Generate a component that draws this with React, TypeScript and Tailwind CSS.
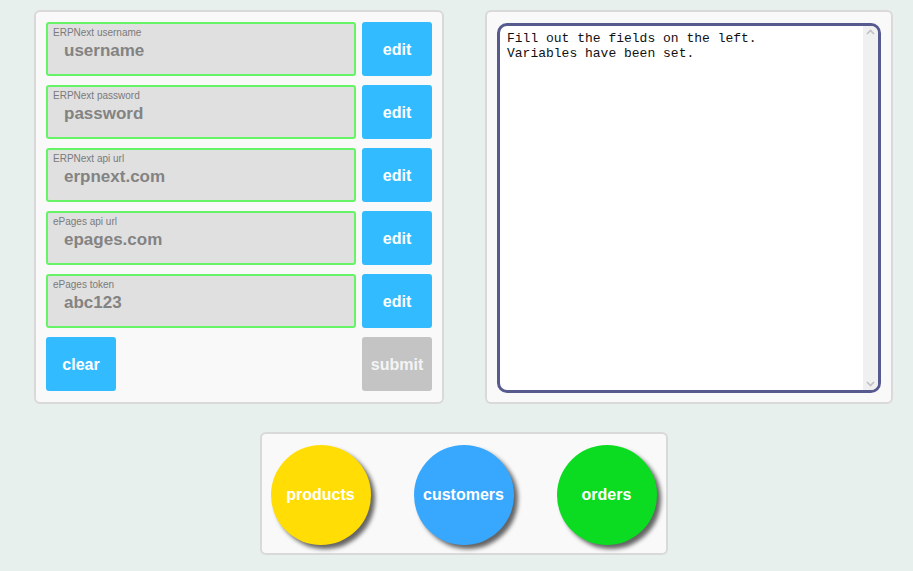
import React from "react";

const fields = [
  { label: "ERPNext username", value: "username" },
  { label: "ERPNext password", value: "password" },
  { label: "ERPNext api url", value: "erpnext.com" },
  { label: "ePages api url", value: "epages.com" },
  { label: "ePages token", value: "abc123" },
];

const circles = [
  { name: "products", color: "bg-[#ffdd05]" },
  { name: "customers", color: "bg-[#38a8fe]" },
  { name: "orders", color: "bg-[#0bdc22]" },
];

export default function App() {
  return (
    <div className="min-h-[571px] bg-[#e7f0ed] pl-[34px] pt-[10px] font-['Liberation_Sans',Arial,sans-serif]">
      <div className="w-[859px]">
        <div className="flex gap-[41px]">
          {/* settings panel */}
          <div className="w-[410px] h-[394px] rounded-[6px] border-2 border-[#d9d9d9] bg-[#f9f9f9] pt-[10px] pl-[10px] pr-[10px]">
            <div className="flex flex-col gap-[9px]">
              {fields.map((f) => (
                <div key={f.label} className="flex gap-[6px]">
                  <div className="w-[310px] h-[54px] rounded-[3px] border-2 border-[#66f466] bg-[#e0e0e0] pl-[5px] pt-[3px]">
                    <div className="text-[10px] leading-[12px] text-[#7a7a7a]">{f.label}</div>
                    <div className="pl-[11px] pt-[1px] text-[17px] leading-[21px] font-bold text-[#838383]">
                      {f.value}
                    </div>
                  </div>
                  <button className="w-[70px] h-[54px] pt-[1px] rounded-[3px] bg-[#33bbff] text-white font-bold text-[16px]">
                    edit
                  </button>
                </div>
              ))}
              <div className="flex justify-between">
                <button className="w-[70px] h-[54px] pt-[1px] rounded-[3px] bg-[#33bbff] text-white font-bold text-[16px]">
                  clear
                </button>
                <button className="w-[70px] h-[54px] pt-[1px] rounded-[3px] bg-[#c4c4c4] text-[#f4f4f4] font-bold text-[16px]">
                  submit
                </button>
              </div>
            </div>
          </div>

          {/* output panel */}
          <div className="w-[408px] h-[394px] rounded-[6px] border-2 border-[#d9d9d9] bg-[#f9f9f9] pt-[11px] pl-[10px] pr-[10px]">
            <div className="flex h-[370px] rounded-[10px] border-[3px] border-[#565a8f] bg-white overflow-hidden">
              <div className="flex-1 pl-[7px] pt-[5px] font-['Liberation_Mono','Courier_New',monospace] text-[13px] leading-[15px] text-[#111] whitespace-pre">
                {"Fill out the fields on the left.\nVariables have been set."}
              </div>
              <div className="w-[15px] bg-[#f0f0f0] flex flex-col justify-between items-center py-[3px]">
                <svg width="9" height="6" viewBox="0 0 9 6">
                  <path d="M1 5 L4.5 1.5 L8 5" stroke="#c0c0c0" strokeWidth="1.6" fill="none" />
                </svg>
                <svg width="9" height="6" viewBox="0 0 9 6">
                  <path d="M1 1 L4.5 4.5 L8 1" stroke="#c0c0c0" strokeWidth="1.6" fill="none" />
                </svg>
              </div>
            </div>
          </div>
        </div>

        {/* navigation */}
        <div className="mt-[28px] flex justify-center">
          <div className="w-[408px] h-[123px] rounded-[6px] border-2 border-[#d9d9d9] bg-[#f9f9f9] flex items-center gap-[43px] pl-[9px] pt-[2px]">
            {circles.map((c) => (
              <button
                key={c.name}
                className={`w-[100px] h-[100px] rounded-full ${c.color} text-white font-bold text-[16px] shadow-[4px_4px_4px_rgba(0,0,0,0.6)]`}
              >
                {c.name}
              </button>
            ))}
          </div>
        </div>
      </div>
    </div>
  );
}
